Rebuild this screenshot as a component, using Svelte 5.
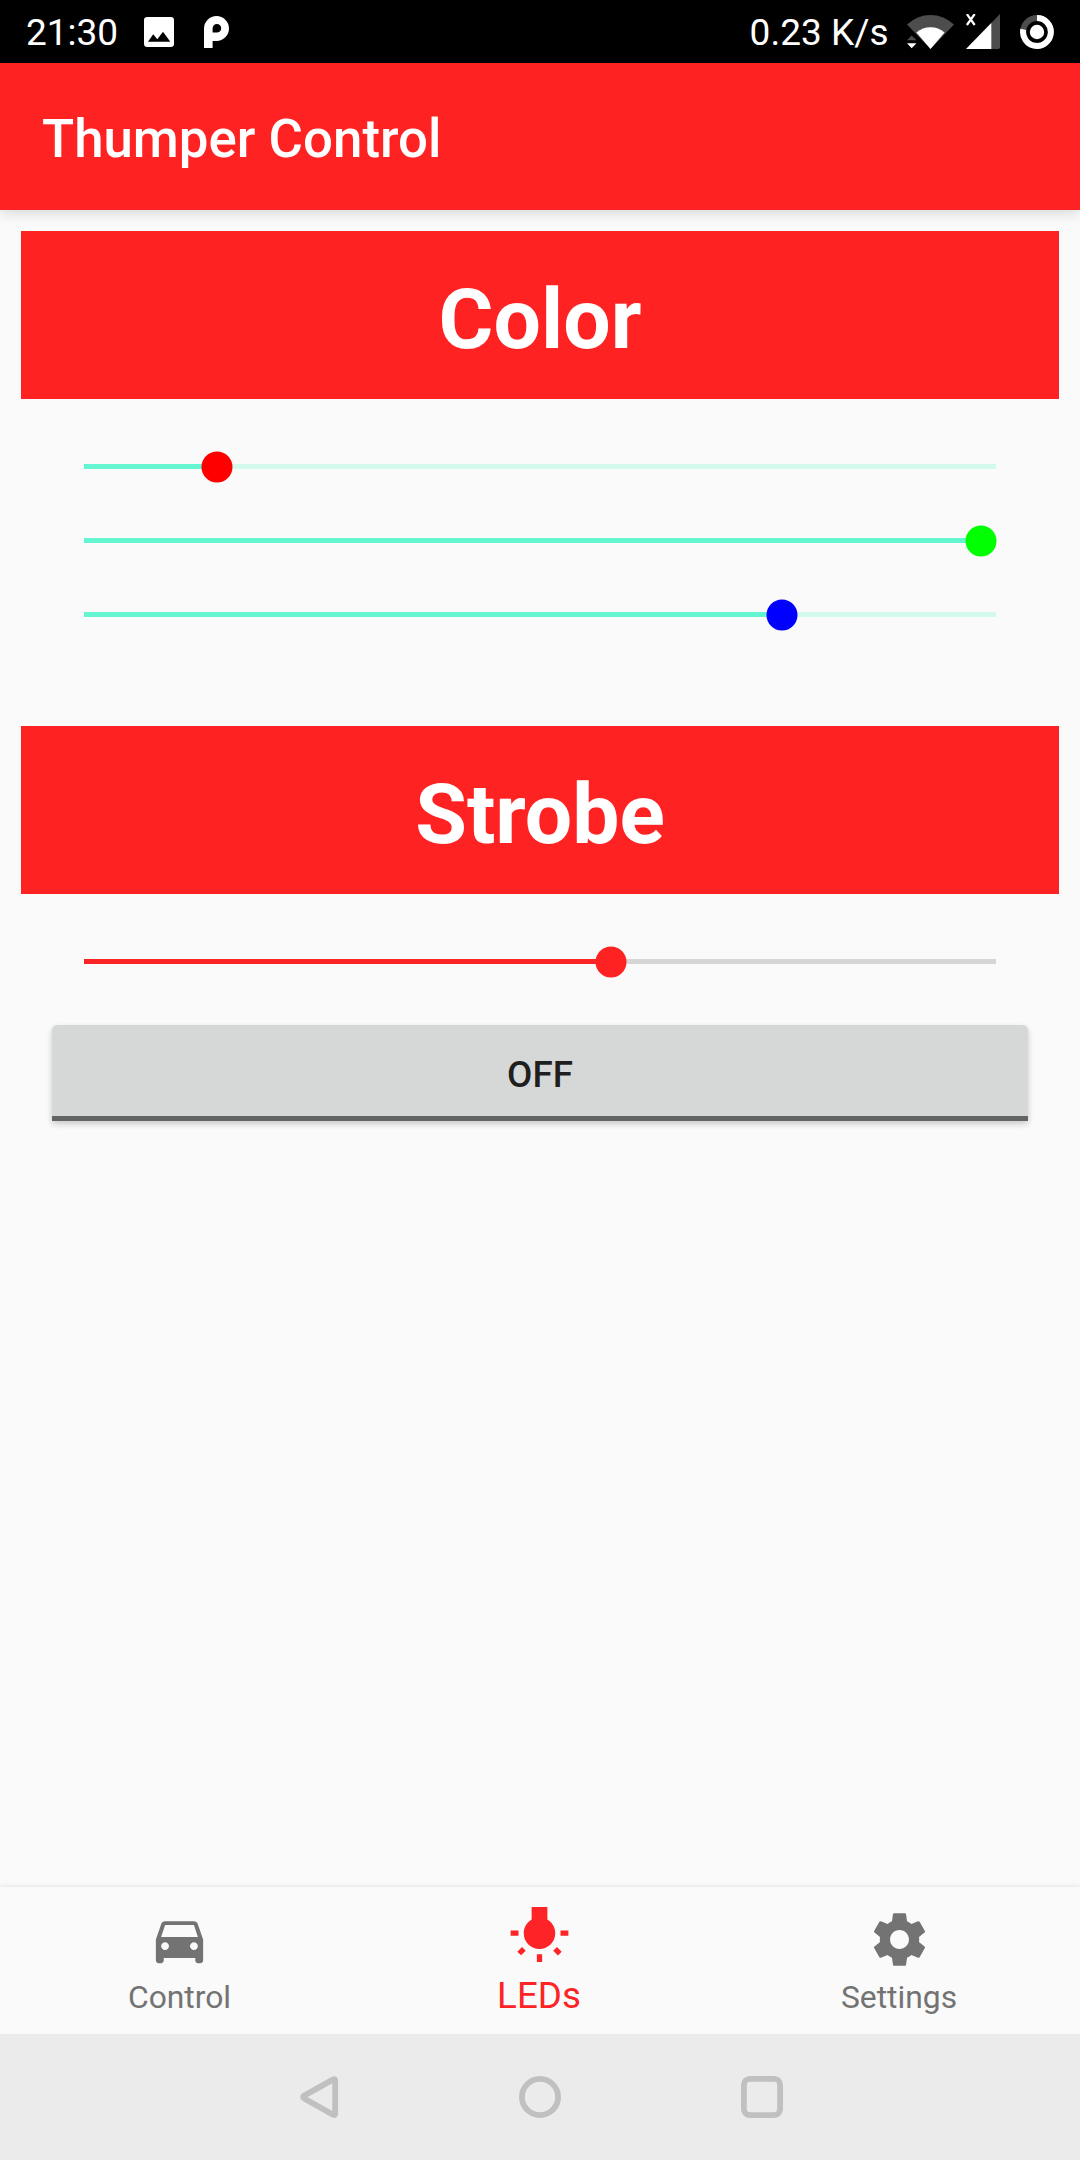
<script>
  const channels = [
    { name: 'Red', thumb: '#ff0000', position: 14.54 },
    { name: 'Green', thumb: '#00ff00', position: 98.41 },
    { name: 'Blue', thumb: '#0000ff', position: 76.5 }
  ];
  const strobe = { name: 'Strobe speed', position: 57.82 };

  const tabs = [
    {
      label: 'Control',
      active: false,
      icon: 'M18.92 6.01C18.72 5.42 18.16 5 17.5 5h-11c-.66 0-1.21.42-1.42 1.01L3 12v8c0 .55.45 1 1 1h1c.55 0 1-.45 1-1v-1h12v1c0 .55.45 1 1 1h1c.55 0 1-.45 1-1v-8l-2.08-5.99zM6.5 16c-.83 0-1.5-.67-1.5-1.5S5.67 13 6.5 13s1.5.67 1.5 1.5S7.33 16 6.5 16zm11 0c-.83 0-1.5-.67-1.5-1.5s.67-1.5 1.5-1.5 1.5.67 1.5 1.5-.67 1.5-1.5 1.5zM5 11l1.5-4.5h11L19 11H5z'
    },
    {
      label: 'LEDs',
      active: true,
      icon: 'M3.55 18.54l1.41 1.41 1.8-1.79-1.41-1.41-1.8 1.79zM11 22.45h2V19.5h-2v2.95zM4 10.5H1v2h3v-2zm11-4.19V1.5H9v4.81C7.21 7.35 6 9.28 6 11.5c0 3.31 2.69 6 6 6s6-2.69 6-6c0-2.22-1.21-4.15-3-5.19zm5 4.19v2h3v-2h-3zm-2.76 7.66l1.79 1.8 1.41-1.41-1.8-1.79-1.4 1.4z'
    },
    {
      label: 'Settings',
      active: false,
      icon: 'M19.43 12.98c.04-.32.07-.64.07-.98s-.03-.66-.07-.98l2.11-1.65c.19-.15.24-.42.12-.64l-2-3.46c-.12-.22-.39-.3-.61-.22l-2.49 1c-.52-.4-1.08-.73-1.69-.98l-.38-2.65C14.46 2.18 14.25 2 14 2h-4c-.25 0-.46.18-.49.42l-.38 2.65c-.61.25-1.17.59-1.69.98l-2.49-1c-.23-.09-.49 0-.61.22l-2 3.46c-.13.22-.07.49.12.64l2.11 1.65c-.04.32-.07.65-.07.98s.03.66.07.98l-2.11 1.65c-.19.15-.24.42-.12.64l2 3.46c.12.22.39.3.61.22l2.49-1c.52.4 1.08.73 1.69.98l.38 2.65c.03.24.24.42.49.42h4c.25 0 .46-.18.49-.42l.38-2.65c.61-.25 1.17-.59 1.69-.98l2.49 1c.23.09.49 0 .61-.22l2-3.46c.12-.22.07-.49-.12-.64l-2.11-1.65zM12 15.6c-1.98 0-3.6-1.62-3.6-3.6s1.62-3.6 3.6-3.6 3.6 1.62 3.6 3.6-1.62 3.6-3.6 3.6z'
    }
  ];
</script>

{#snippet slider(name, position, thumb)}
  <div class="slider" role="slider" tabindex="0" aria-label={name} aria-valuenow={position}>
    <div class="fill" style:width="{position}%"></div>
    <div class="thumb" style:left="{position}%" style:background={thumb}></div>
  </div>
{/snippet}

<div class="screen">
  <div class="status">
    <span class="clock">21:30</span>
    <svg class="photo" width="30" height="30" viewBox="0 0 30 30">
      <path fill="#fff" fill-rule="evenodd" d="M3.3 0h23.4A3.3 3.3 0 0 1 30 3.3v23.4a3.3 3.3 0 0 1-3.3 3.3H3.3A3.3 3.3 0 0 1 0 26.7V3.3A3.3 3.3 0 0 1 3.3 0zM9.2 17.2L4 24.8h22.3L19 14.8l-5.7 7.4z" />
    </svg>
    <svg class="parking" width="25" height="32" viewBox="0 0 25 32">
      <path fill="#fff" fill-rule="evenodd" d="M0 32V12.5A12.5 12.5 0 1 1 12.5 25H8.6v7zM8.6 16.6h4a4.3 4.3 0 1 0-4-4.2z" />
    </svg>
    <span class="spacer"></span>
    <span class="speed">0.23 K/s</span>
    <svg class="wifi" width="47" height="34" viewBox="0 0 47 34">
      <path fill="#4d4d4d" d="M0 9.6Q10 0 23.5 0T47 9.6L23.5 34z" />
      <path fill="#fff" d="M9.4 17.4Q15.5 12.2 23.5 12.2T37.6 17.4L23.5 34z" />
      <path fill="#4d4d4d" d="M0 25.2L4.7 20.6l4.8 4.6z" />
      <path fill="#fff" d="M0 28.3h9.5L4.7 33.2z" />
    </svg>
    <svg class="signal" width="34" height="35" viewBox="0 0 34 35">
      <path fill="#4d4d4d" d="M34 0v33q0 2-2 2H0z" />
      <path fill="#fff" d="M25.3 9v26H0z" />
      <path stroke="#fff" stroke-width="2.2" fill="none" d="M.9 0L8.7 11M8.7 0L.9 11" />
    </svg>
    <svg class="battery" width="34" height="34" viewBox="0 0 34 34">
      <circle cx="17" cy="17" r="13.9" fill="none" stroke="#4d4d4d" stroke-width="6" />
      <path d="M17 3.1A13.9 13.9 0 1 1 3.3 14.4" fill="none" stroke="#fff" stroke-width="6" />
      <circle cx="17" cy="17" r="7.2" fill="#fff" />
    </svg>
  </div>

  <header>Thumper Control</header>

  <main>
    <h2>Color</h2>
    <section class="rgb">
      {#each channels as c}
        {@render slider(c.name, c.position, c.thumb)}
      {/each}
    </section>

    <h2>Strobe</h2>
    <section class="strobe">
      {@render slider(strobe.name, strobe.position, '#ff2222')}
    </section>
    <button>OFF</button>
  </main>

  <nav>
    {#each tabs as tab}
      <div class="tab" class:active={tab.active}>
        <svg width="63" height="63" viewBox="0 0 24 24"><path fill="currentColor" d={tab.icon} /></svg>
        <span>{tab.label}</span>
      </div>
    {/each}
  </nav>

  <div class="system">
    <svg width="42" height="44" viewBox="0 0 42 44">
      <path d="M36.3 4.4L7.2 20.6q-2.4 1.4 0 2.8L36.3 39.8q1.9.8 1.9-1.4V5.8q0-2.2-1.9-1.4z" />
    </svg>
    <svg width="42" height="42" viewBox="0 0 42 42"><circle cx="21" cy="21" r="18.1" /></svg>
    <svg width="42" height="42" viewBox="0 0 42 42"><rect x="2.9" y="2.9" width="36.2" height="36.2" rx="6" /></svg>
  </div>
</div>

<style>
  :global(body) {
    margin: 0;
    background: #fafafa;
  }
  .screen {
    width: 1080px;
    height: 2160px;
    display: flex;
    flex-direction: column;
    overflow: hidden;
    background: #fafafa;
    font-family: Roboto, 'Liberation Sans', sans-serif;
  }
  svg {
    display: block;
    flex: none;
  }
  .status {
    height: 63px;
    flex: none;
    display: flex;
    align-items: center;
    box-sizing: border-box;
    padding: 0 26px;
    background: #000;
    color: #fff;
    font-size: 37px;
    line-height: 44px;
    white-space: nowrap;
  }
  .clock,
  .speed {
    padding-top: 3px;
  }
  .clock {
    width: 118px;
  }
  .parking {
    margin-left: 30px;
  }
  .spacer {
    flex: 1;
  }
  .wifi {
    margin-left: 18px;
  }
  .signal {
    margin-left: 12.5px;
  }
  .battery {
    margin-left: 20px;
  }
  header {
    height: 147px;
    flex: none;
    box-sizing: border-box;
    padding: 5px 42px 0;
    position: relative;
    z-index: 1;
    background: #ff2222;
    color: #fff;
    font-size: 52.8px;
    font-weight: 500;
    line-height: 143px;
    box-shadow: 0 3px 12px rgba(0, 0, 0, 0.14);
  }
  main {
    flex: 1;
    display: flex;
    flex-direction: column;
    padding: 21px 21px 0;
  }
  h2 {
    height: 168px;
    box-sizing: border-box;
    margin: 0;
    padding-top: 9px;
    background: #ff2222;
    color: #fff;
    font-size: 84px;
    font-weight: 700;
    line-height: 159px;
    text-align: center;
  }
  section {
    padding: 0 63px;
    display: flex;
    flex-direction: column;
    gap: 69px;
  }
  .rgb {
    padding-top: 65px;
    padding-bottom: 109px;
    --track: #d3f8ec;
    --fill: #64f6d0;
  }
  .strobe {
    padding-top: 65px;
    padding-bottom: 61px;
    --track: #d6d6d6;
    --fill: #fb2427;
  }
  .slider {
    height: 5px;
    position: relative;
    background: var(--track);
  }
  .fill {
    height: 5px;
    background: var(--fill);
  }
  .thumb {
    position: absolute;
    top: 50%;
    width: 31px;
    height: 31px;
    border-radius: 50%;
    transform: translate(-50%, -50%);
  }
  button {
    height: 96px;
    margin: 0 31px;
    padding: 7px 0 0;
    border: 0;
    border-bottom: 5px solid #636564;
    border-radius: 5px 5px 0 0;
    background: #d6d8d7;
    box-shadow: 0 3px 6px rgba(0, 0, 0, 0.2);
    color: #1e1f1e;
    font: 500 36.75px Roboto, 'Liberation Sans', sans-serif;
  }
  nav {
    height: 147px;
    flex: none;
    display: grid;
    grid-template-columns: 359px 361px 360px;
    box-sizing: border-box;
    background: #fafafa;
    box-shadow: 0 -1px 5px rgba(0, 0, 0, 0.09);
  }
  .tab {
    display: flex;
    flex-direction: column;
    align-items: center;
    box-sizing: border-box;
    padding: 21px 2px 0 0;
    color: #737373;
    font-size: 31.8px;
    line-height: 38px;
  }
  .tab:first-child {
    padding-right: 0;
  }
  .tab span {
    margin-top: 7px;
  }
  .tab.active {
    padding: 16px 1px 0 0;
    color: #fd2326;
    font-size: 36.75px;
    line-height: 44px;
  }
  .tab.active span {
    margin-top: 8px;
  }
  .system {
    height: 126px;
    flex: none;
    display: flex;
    align-items: center;
    justify-content: center;
    gap: 180px;
    background: #ebebeb;
  }
  .system svg {
    fill: none;
    stroke: #c0c0c0;
    stroke-width: 5.8;
  }
</style>
